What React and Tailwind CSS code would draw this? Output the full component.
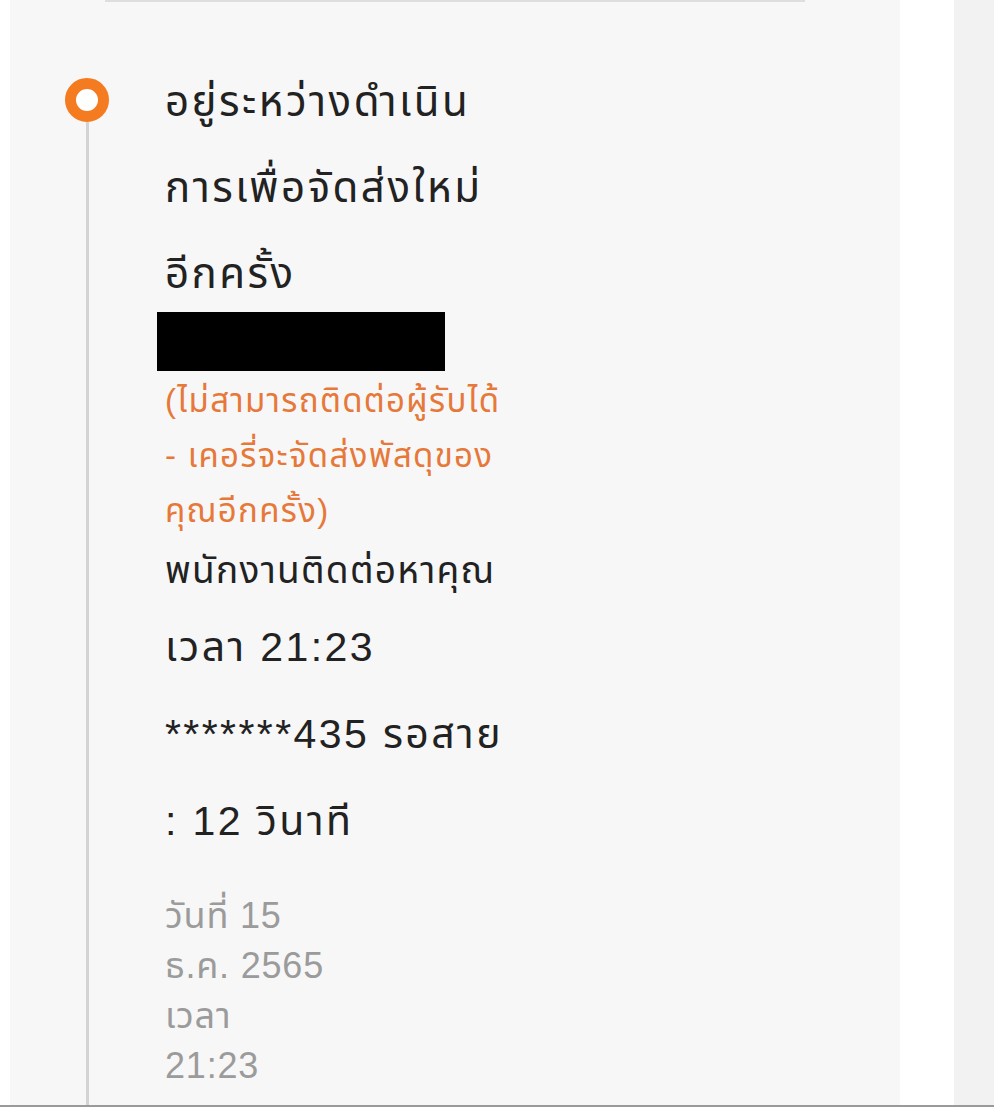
import React from 'react';

const App = () => {
  return (
    <div className="w-[994px] h-[1107px] flex bg-white border-b-2 border-[#9a9a9a] overflow-hidden font-['Liberation_Sans','Noto_Sans_Thai',sans-serif]">
      <div className="w-[10px] bg-white" />
      <div className="w-[890px] bg-[#f7f7f7] flex flex-col">
        <div className="ml-[95px] w-[700px] h-[2px] bg-[#dedede]" />
        <div className="flex flex-1 pt-[57px]">
          {/* timeline marker */}
          <div className="ml-[55px] w-[44px] flex flex-col items-center shrink-0">
            <div className="w-[44px] h-[44px] rounded-full border-[11px] border-[#f47b20] bg-white shrink-0 mt-[19px]" />
            <div className="w-[3px] flex-1 bg-[#d3d3d3]" />
          </div>
          <div className="ml-[56px] flex flex-col">
            <div className="text-[42px] leading-[86px] tracking-[2.5px] text-[#222]">
              อยู่ระหว่างดำเนิน
              <br />
              การเพื่อจัดส่งใหม่
              <br />
              อีกครั้ง
            </div>
            <div className="-ml-[8px] -mt-[5px] w-[288px] h-[59px] bg-black" />
            <div className="text-[33px] leading-[55px] tracking-[1.3px] text-[#e6793a] mt-[2px]">
              (ไม่สามารถติดต่อผู้รับได้
              <br />- เคอรี่จะจัดส่งพัสดุของ
              <br />
              คุณอีกครั้ง)
            </div>
            <div className="text-[37px] leading-[66px] tracking-[1.3px] text-[#222]">พนักงานติดต่อหาคุณ</div>
            <div className="text-[41px] leading-[87px] tracking-[2.4px] text-[#222]">
              เวลา 21:23
              <br />
              *******435 รอสาย
              <br />: 12 วินาที
            </div>
            <div className="text-[36px] leading-[50px] tracking-[0.8px] text-[#9b9b9b] mt-[26px]">
              วันที่ 15
              <br />
              ธ.ค. 2565
              <br />
              เวลา
              <br />
              21:23
            </div>
          </div>
        </div>
      </div>
      <div className="w-[54px] bg-white" />
      <div className="flex-1 bg-[#f2f2f2]" />
    </div>
  );
};

export default App;
